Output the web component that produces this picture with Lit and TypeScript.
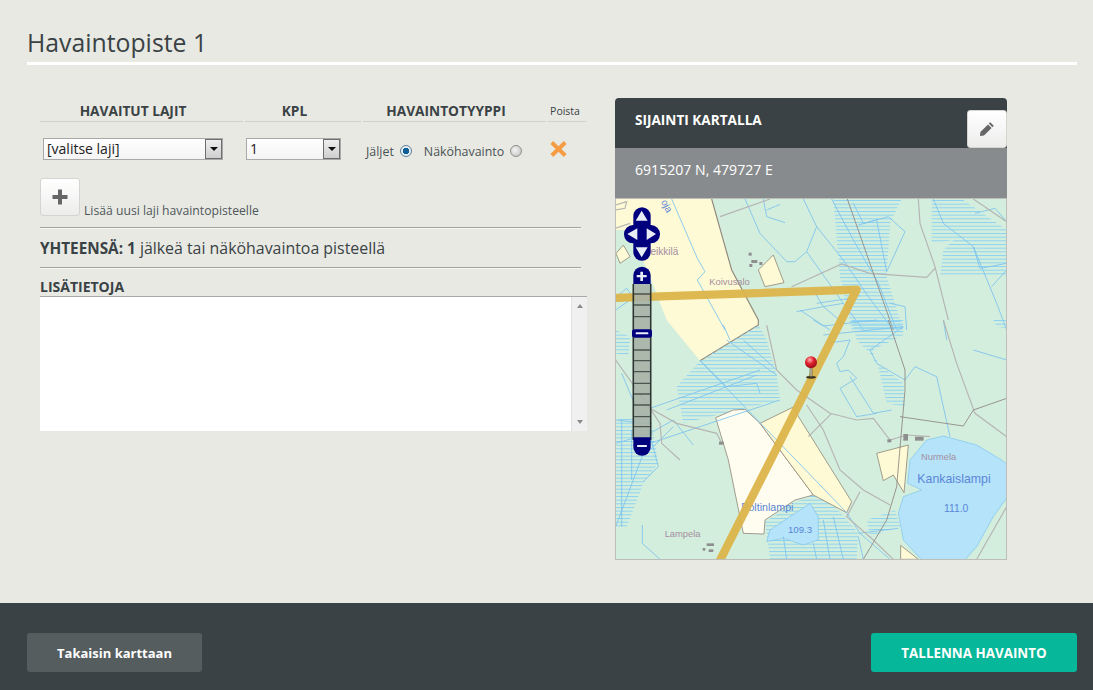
import { LitElement, css, html, svg } from 'lit';
import { customElement } from 'lit/decorators.js';

// Map data is written in 3x pixels, matching the 1170x1080 viewBox of the svg.
const topBlue = [
   '185,327 262,505 285,545 262,570 345,720',
   '405,327 450,430 530,515 555,515 590,485 620,410 580,327',
   '460,327 470,380 525,398',
   '470,360 510,343',
   '590,485 700,640 760,720',
   '620,410 700,510 775,620 850,720',
   '665,327 730,450 805,580 860,720',
   '730,340 760,400 835,380 885,425 830,545 800,390 745,405',
   '610,600 720,590 750,620',
   '610,600 640,650 700,640',
   '570,660 660,720',
   '620,640 720,625',
   '560,665 640,650 700,700',
   '840,640 885,650 890,720',
   '970,327 1000,400 1090,470 1110,535 1190,520',
   '1095,370 1155,355 1190,395',
   '1090,470 1160,640 1190,720',
   '1145,590 1190,540',
   '20,620 50,595 75,630',
   '17,660 60,630',
];
const topGray = [
   '330,380 480,327',
   '545,590 695,522 780,550 950,562 975,535',
   '925,327 930,400 975,530 1015,690',
   '1090,327 1190,395',
   '17,345 50,335 45,355 17,360',
   '17,415 60,400',
];
const bottomBlue = [
   '610,0 640,18 800,0',
   '640,45 880,20',
   '650,70 720,60 700,110 680,130 690,155 715,150 740,175 690,205 740,290 800,280',
   '780,90 880,20',
   '780,90 800,130 885,180',
   '720,170 790,280 845,270',
   '340,15 360,60',
   '270,122 500,360 710,578 750,640 840,718',
   '120,265 450,150',
   '170,270 440,165',
   '120,370 510,240',
   '350,60 500,165',
   '400,60 500,150',
   '270,122 350,200 440,190 450,220',
   '17,370 120,340 190,300 250,375',
   '190,320 120,390',
   '35,160 90,290',
   '17,300 110,310 145,440 100,485',
   '65,480 65,330',
   '35,300 35,620',
   '100,400 17,620',
   '97,615 97,670 150,718',
   '885,180 915,140 980,170 1020,350',
   '1000,0 1010,60',
   '670,590 700,718',
   '640,600 660,718',
   '520,650 530,718',
   '610,670 620,718',
   '745,640 865,625',
   '1190,120 1090,90',
   '745,650 760,718',
];
const bottomGray = [
   '470,15 500,150 560,210 660,280 740,300 790,295 840,360 890,345 960,350',
   '590,255 640,330 690,450 760,510 840,555',
   '595,350 665,280',
   '750,515 710,590 790,660 850,718',
   '1000,0 1040,130 1095,280 1190,350',
   '1190,560 1100,718',
   '17,120 120,265 200,310 320,340 335,370',
   '120,265 150,310 155,370 210,420',
];
const topHatch = [
   '670,327 875,327 840,400 830,560 880,720 725,720 690,560',
   '965,330 1060,330 1190,420 1190,560 990,560 1000,480 1030,450 965,460',
];
const bottomHatch = [
   '725,0 880,0 880,45 790,90 790,120 880,190 885,260 830,250 800,120 740,60',
   '270,122 445,15 470,60 500,165 510,240 220,310 200,200',
   '17,30 60,50 55,105 17,100',
   '17,300 120,280 145,430 100,490 50,620 17,620',
   '605,480 745,640 740,718 480,718 465,605 560,545 610,525',
   '855,570 870,620 780,650 770,600',
   '1150,0 1190,0 1190,25 1160,20',
];

function lines(items: string[], cls: string) {
   return items.map((p) => svg`<polyline class=${cls} points=${p}></polyline>`);
}
function shapes(items: string[], cls: string) {
   return items.map((p) => svg`<polygon class=${cls} points=${p}></polygon>`);
}

@customElement('app-root')
export class AppRoot extends LitElement {
   static styles = css`
      :host {
         display: block;
         height: 100vh;
         background: #e8e9e3;
         color: #3a4245;
         font-family: 'Open Sans', 'Noto Sans', sans-serif;
      }
      .page {
         height: 100%;
         display: flex;
         flex-direction: column;
      }
      .head {
         margin: 0 16px 0 27px;
         height: 62px;
         border-bottom: 3px solid #fff;
         box-sizing: content-box;
      }
      h1 {
         margin: 0;
         padding-top: 25px;
         font-size: 24.8px;
         line-height: 34px;
         font-weight: 400;
      }
      .main {
         flex: 1;
         display: flex;
         align-items: flex-start;
         gap: 28px;
         padding: 33px 0 0 40px;
      }
      .left {
         width: 547px;
      }
      .grid {
         display: grid;
         grid-template-columns: 203px 116px 183px 38px;
         column-gap: 2px;
         width: 546px;
      }
      .th {
         box-sizing: border-box;
         height: 24px;
         line-height: 26px;
         text-align: center;
         font-size: 13.7px;
         font-weight: 700;
         border-bottom: 1px solid #d0d1cb;
         padding-right: 17px;
      }
      .th.small {
         font-size: 10.5px;
         font-weight: 400;
         line-height: 26px;
         padding-right: 4px;
      }
      .row {
         display: flex;
         align-items: center;
         height: 22px;
         margin-top: 16px;
      }
      .cell-a {
         padding-left: 3px;
      }
      .cell-b {
         padding-left: 1px;
      }
      .select {
         box-sizing: border-box;
         height: 22px;
         display: flex;
         align-items: stretch;
         justify-content: space-between;
         border: 1px solid #a9a9a9;
         background: linear-gradient(#fff, #f4f4f4);
         font-size: 14px;
         line-height: 20px;
         color: #222;
         padding-left: 3px;
      }
      .select.species {
         width: 180px;
      }
      .select.count {
         width: 95px;
      }
      .arrow {
         width: 15px;
         border: 1px solid #6d6d6d;
         background: linear-gradient(#eee, #cfcfcf);
         display: flex;
         align-items: center;
         justify-content: center;
      }
      .arrow::after {
         content: '';
         border: 4px solid transparent;
         border-top: 4px solid #111;
         border-bottom: 0;
      }
      .type {
         font-size: 12.4px;
         color: #4a5255;
         padding: 2px 0 0 3px;
      }
      .radio {
         display: inline-block;
         box-sizing: border-box;
         width: 12px;
         height: 12px;
         border-radius: 50%;
         border: 1px solid #8e8f8f;
         background: radial-gradient(circle at 40% 40%, #f4f4f4, #bdbdbd);
         margin: 0 12px 0 6px;
         vertical-align: -1px;
      }
      .radio.on {
         background: radial-gradient(circle, #0f5f96 0 3px, #e6eef4 3.5px);
         border-color: #5f7f99;
      }
      .del {
         padding-left: 2px;
         display: flex;
         align-items: center;
      }
      .add {
         display: flex;
         align-items: flex-end;
         gap: 4px;
         margin-top: 16px;
         font-size: 12.2px;
         color: #4f575a;
      }
      .tool {
         box-sizing: border-box;
         width: 40px;
         height: 38px;
         display: flex;
         align-items: center;
         justify-content: center;
         background: linear-gradient(#fff, #ecedeb);
         border: 1px solid #d4d5d0;
         border-radius: 3px;
         padding: 0;
      }
      .add span {
         line-height: 16px;
         margin-bottom: -3px;
      }
      .total {
         width: 541px;
         box-sizing: border-box;
         margin-top: 11px;
         height: 41px;
         line-height: 40px;
         border-top: 1px solid #a3a49f;
         border-bottom: 1px solid #a3a49f;
         box-shadow: inset 0 1px #f6f6f3, 0 1px #f6f6f3;
         font-size: 15.9px;
      }
      .total b {
         font-size: 15.3px;
      }
      .note-label {
         margin-top: 9px;
         font-size: 14px;
         font-weight: 700;
         line-height: 19px;
      }
      .note {
         display: flex;
         height: 135px;
         background: #fff;
         border-top: 1px solid #a9aaa6;
         box-sizing: border-box;
      }
      textarea {
         flex: 1;
         border: 0;
         padding: 0;
         resize: none;
         outline: none;
         background: transparent;
         overflow: hidden;
      }
      .scroll {
         width: 16px;
         background: #f0f0f0;
         border-left: 1px solid #e2e2e2;
         box-sizing: border-box;
         display: flex;
         flex-direction: column;
         justify-content: space-between;
         align-items: center;
         padding: 7px 0;
      }
      .scroll i {
         border: 3px solid transparent;
      }
      .scroll i.up {
         border-bottom: 4px solid #8a8a8a;
         border-top: 0;
      }
      .scroll i.down {
         border-top: 4px solid #8a8a8a;
         border-bottom: 0;
      }
      .panel {
         width: 392px;
      }
      .panel-head {
         height: 50px;
         background: #3a4245;
         border-radius: 4px 4px 0 0;
         display: flex;
         justify-content: space-between;
         align-items: flex-end;
      }
      .panel-head b {
         align-self: flex-start;
         margin: 12px 0 0 20px;
         font-size: 13.6px;
         line-height: 19px;
         color: #fff;
      }
      .coords {
         height: 50px;
         line-height: 44px;
         background: #888b8d;
         color: #fff;
         font-size: 14.1px;
         padding-left: 20px;
      }
      .map {
         display: block;
         width: 392px;
         height: 362px;
         box-sizing: border-box;
         border: 1px solid #bdbdb9;
         background: #d4eedd;
      }
      .map .blue {
         fill: none;
         stroke: #7cc3ee;
         stroke-width: 2.6;
      }
      .map .gray {
         fill: none;
         stroke: #b5b5b3;
         stroke-width: 3.5;
      }
      .map .hatch {
         fill: url(#hatch);
      }
      .map .field {
         fill: #fffad6;
         stroke: #928a7c;
         stroke-width: 2.5;
      }
      .map .field.pale {
         fill: #fffdef;
      }
      .map .open {
         fill: #fffad6;
      }
      .map .lake {
         fill: #b4e3fa;
         stroke: #7cc3ee;
         stroke-width: 2;
      }
      .map .road {
         fill: none;
         stroke: #dcb44a;
         stroke-width: 25;
         stroke-linejoin: round;
         opacity: 0.95;
      }
      .map .wire {
         fill: none;
         stroke: #8f8680;
         stroke-width: 2.6;
      }
      .map text {
         font-family: 'Liberation Sans', Arial, sans-serif;
         font-size: 28px;
      }
      .map .place {
         fill: #a48fa0;
      }
      .map .water {
         fill: #5b86d6;
      }
      .map .lake-name {
         font-size: 37px;
      }
      .map .num-big {
         font-size: 31px;
      }
      .map .num {
         font-size: 29px;
      }
      .map .pond {
         font-size: 32px;
      }
      .map .nav {
         fill: #00007f;
      }
      .map .glyph {
         fill: #e9eef6;
      }
      .foot {
         height: 87px;
         background: #3a4245;
         display: flex;
         justify-content: space-between;
         align-items: flex-start;
         padding: 30px 16px 0 27px;
         box-sizing: border-box;
      }
      .btn {
         height: 39px;
         border: 0;
         border-radius: 3px;
         color: #fff;
         font: 700 13px 'Open Sans', sans-serif;
         padding: 0;
      }
      .btn.back {
         width: 175px;
         background: #565d5f;
      }
      .btn.save {
         width: 206px;
         font-size: 13.4px;
         background: #06b899;
      }
   `;

   renderMap() {
      return svg`
         <defs>
            <pattern id="hatch" width="12" height="11" patternUnits="userSpaceOnUse">
               <rect width="12" height="3" fill="#8cd2f1"></rect>
            </pattern>
            <radialGradient id="ball" cx="0.4" cy="0.3" r="0.75">
               <stop offset="0" stop-color="#ffb0b0"></stop>
               <stop offset="0.45" stop-color="#e0202c"></stop>
               <stop offset="1" stop-color="#8e0c14"></stop>
            </radialGradient>
         </defs>
         <g transform="translate(-18,-327)">
            ${shapes(topHatch, 'hatch')}
            <polygon class="open" points="17,327 305,327 365,540 445,690 445,705 270,812 170,690 120,560 60,420 17,420"></polygon>
            <polyline class="gray" style="stroke:#928a7c" points="305,327 365,540 445,690 445,705 270,812"></polyline>
            <polygon class="field" points="18,490 40,465 60,500 30,520"></polygon>
            <polygon class="field" points="445,540 490,495 522,578 465,590"></polygon>
            ${lines(topBlue, 'blue')}
            ${lines(topGray, 'gray')}
            <polyline class="wire" points="712,327 850,720"></polyline>
            <text class="water" style="font-size:30px" transform="translate(152,335) rotate(62)">oja</text>
            <text class="place" x="100" y="494" style="font-size:30px">Heikkilä</text>
            <text class="place" x="298" y="585">Koivusalo</text>
            <g fill="#8e8e8e">
               <rect x="416" y="488" width="9" height="9"></rect>
               <rect x="424" y="510" width="18" height="9"></rect>
               <rect x="418" y="522" width="9" height="9"></rect>
               <rect x="448" y="516" width="9" height="9"></rect>
            </g>
         </g>
         <g transform="translate(-18,363)">
            ${shapes(bottomHatch, 'hatch')}
            <polygon class="field pale" points="317,293 370,270 405,268 450,310 610,525 555,540 465,600 462,642 400,640 355,420"></polygon>
            <polygon class="field" points="450,310 548,262 725,545 710,578 610,525"></polygon>
            <polygon class="field" points="800,400 895,375 882,518 850,465 820,482"></polygon>
            <polygon class="field" points="872,676 925,718 872,718"></polygon>
            <polygon class="lake" points="1000,348 1100,375 1175,420 1200,440 1200,520 1150,590 1100,680 1060,725 940,725 880,660 865,580 880,530 935,510 893,490 900,420 950,360"></polygon>
            <polygon class="lake" points="470,665 480,630 540,590 600,550 625,590 625,660 580,675 520,655"></polygon>
            ${lines(bottomBlue, 'blue')}
            ${lines(bottomGray, 'gray')}
            <polyline class="wire" points="835,0 885,150 885,210 860,500 830,600 760,718"></polyline>
            <polyline class="wire" points="870,290 1060,318 1090,270 1190,235"></polyline>
            <g fill="#8e8e8e">
               <rect x="832" y="358" width="12" height="9"></rect>
               <rect x="880" y="342" width="14" height="20"></rect>
               <rect x="915" y="350" width="26" height="12"></rect>
               <rect x="327" y="365" width="14" height="9"></rect>
               <rect x="290" y="670" width="22" height="8"></rect>
               <rect x="278" y="684" width="8" height="8"></rect>
               <rect x="296" y="688" width="14" height="8"></rect>
            </g>
            <text class="place" x="933" y="421">Nurmela</text>
            <text class="place" x="164" y="650">Lampela</text>
            <text class="water lake-name" x="922" y="488">Kankaislampi</text>
            <text class="water num-big" x="1002" y="575">111.0</text>
            <text class="water num" x="534" y="638">109.3</text>
            <text class="water pond" x="394" y="574">Poltinlampi</text>
         </g>
         <polyline class="road" points="-10,297 722,272 309,1090"></polyline>
         <g transform="translate(-18,-327)">
            <rect x="73" y="582" width="46" height="480" fill="#a7b0a6" fill-opacity="0.88"></rect>
            <path d="M70 582 V1050 M122 582 V1050" stroke="#2f3532" stroke-width="5" fill="none"></path>
            <path d="M72 612H120 M72 645H120 M72 680H120 M72 780H120 M72 812H120 M72 845H120 M72 880H120 M72 912H120 M72 945H120 M72 980H120 M72 1010H120" stroke="#4d5450" stroke-width="4" fill="none"></path>
            <rect class="nav" x="70" y="352" width="52" height="160" rx="26"></rect>
            <rect class="nav" x="42" y="405" width="108" height="55" rx="27"></rect>
            <polygon class="glyph" points="95,362 113,392 77,392"></polygon>
            <polygon class="glyph" points="52,432 82,415 82,450"></polygon>
            <polygon class="glyph" points="138,432 110,415 110,450"></polygon>
            <polygon class="glyph" points="95,502 77,472 113,472"></polygon>
            <path class="nav" d="M70 582 V556 a26 26 0 0 1 52 0 V582 Z"></path>
            <path class="glyph" d="M91 545 h8 v10 h11 v7 h-11 v11 h-8 v-11 h-11 v-7 h11 Z"></path>
         </g>
         <g transform="translate(-18,363)">
            <rect class="nav" x="66" y="28" width="60" height="25" rx="8"></rect>
            <rect class="glyph" x="77" y="37" width="38" height="6" rx="2"></rect>
            <path class="nav" d="M70 352 H122 V381 a26 26 0 0 1 -52 0 Z"></path>
            <rect class="glyph" x="81" y="375" width="30" height="6" rx="2"></rect>
            <ellipse cx="603" cy="172" rx="15" ry="4" fill="#3a3420"></ellipse>
            <rect x="600" y="140" width="6" height="30" fill="#d8d2b0" stroke="#4c4a38" stroke-width="2"></rect>
            <circle cx="603" cy="127" r="18" fill="url(#ball)"></circle>
         </g>
      `;
   }

   render() {
      return html`
         <div class="page">
            <div class="head"><h1>Havaintopiste 1</h1></div>
            <div class="main">
               <div class="left">
                  <div class="grid">
                     <div class="th">HAVAITUT LAJIT</div>
                     <div class="th">KPL</div>
                     <div class="th">HAVAINTOTYYPPI</div>
                     <div class="th small">Poista</div>
                     <div class="row cell-a">
                        <div class="select species">[valitse laji]<span class="arrow"></span></div>
                     </div>
                     <div class="row cell-b">
                        <div class="select count">1<span class="arrow"></span></div>
                     </div>
                     <div class="row type">
                        <label>Jäljet<span class="radio on"></span></label>
                        <label>Näköhavainto<span class="radio"></span></label>
                     </div>
                     <div class="row del">
                        <svg width="17" height="18" viewBox="0 0 17 18">
                           <path d="M3.2 1 L8.5 6.2 L13.8 1 L16.6 4 L11.4 9 L16.6 14 L13.8 17 L8.5 11.8 L3.2 17 L.4 14 L5.6 9 L.4 4 Z" fill="#f59b42"></path>
                        </svg>
                     </div>
                  </div>
                  <div class="add">
                     <button class="tool" aria-label="Lisää">
                        <svg width="18" height="18" viewBox="0 0 18 18">
                           <path d="M7 1.5h4v5.5h5.5v4H11v5.5H7V11H1.5V7H7Z" fill="#666"></path>
                        </svg>
                     </button>
                     <span>Lisää uusi laji havaintopisteelle</span>
                  </div>
                  <div class="total"><b>YHTEENSÄ: 1</b> jälkeä tai näköhavaintoa pisteellä</div>
                  <div class="note-label">LISÄTIETOJA</div>
                  <div class="note">
                     <textarea></textarea>
                     <div class="scroll"><i class="up"></i><i class="down"></i></div>
                  </div>
               </div>
               <div class="panel">
                  <div class="panel-head">
                     <b>SIJAINTI KARTALLA</b>
                     <button class="tool" aria-label="Muokkaa">
                        <svg width="16" height="16" viewBox="0 0 16 16">
                           <path d="M11.2 1.2 L14.8 4.8 L13.4 6.2 L9.8 2.6 Z M9 3.4 L12.6 7 L5 14.6 L1 15 L1.4 11 Z" fill="#666"></path>
                        </svg>
                     </button>
                  </div>
                  <div class="coords">6915207 N, 479727 E</div>
                  <svg class="map" viewBox="0 0 1170 1080">${this.renderMap()}</svg>
               </div>
            </div>
            <div class="foot">
               <button class="btn back">Takaisin karttaan</button>
               <button class="btn save">TALLENNA HAVAINTO</button>
            </div>
         </div>
      `;
   }
}
